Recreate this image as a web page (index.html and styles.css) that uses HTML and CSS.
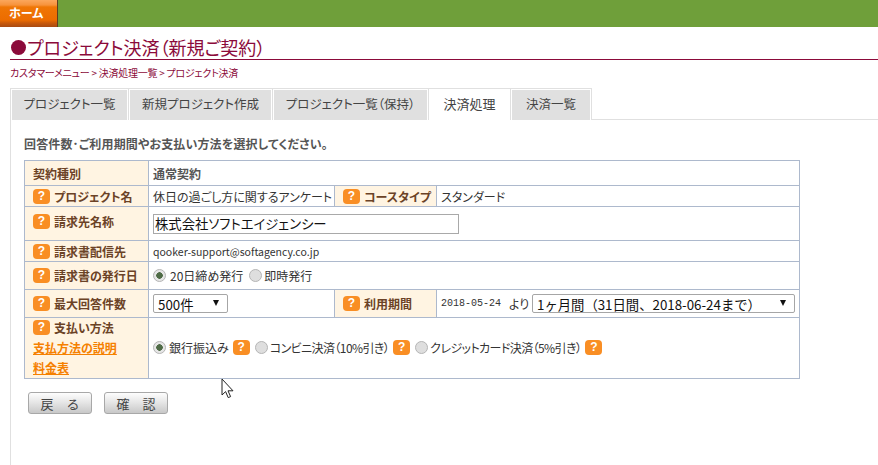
FILE: index.html
```html
<!DOCTYPE html>
<html lang="ja">
<head>
<meta charset="utf-8">
<title>プロジェクト決済</title>
<link rel="stylesheet" href="styles.css">
</head>
<body>
<nav class="topbar"><a class="home">ホーム</a></nav>
<header class="page-head">
  <h1 class="title"><span class="dot"></span>プロジェクト決済（新規ご契約）</h1>
  <p class="crumbs">カスタマーメニュー &gt; 決済処理一覧 &gt; プロジェクト決済</p>
</header>
<main class="panel">
  <ul class="tabs">
    <li class="tab t1">プロジェクト一覧</li>
    <li class="tab t2">新規プロジェクト作成</li>
    <li class="tab t3">プロジェクト一覧（保持）</li>
    <li class="tab t4 active">決済処理</li>
    <li class="tab t5">決済一覧</li>
  </ul>
  <div class="body">
    <p class="lead">回答件数･ご利用期間やお支払い方法を選択してください。</p>
    <table class="form">
      <colgroup><col class="c1"><col class="c2"><col class="c3"><col class="c4"></colgroup>
      <tr class="r1"><th>契約種別</th><td colspan="3" class="bold">通常契約</td></tr>
      <tr class="r2">
        <th><span class="q">?</span>プロジェクト名</th><td>休日の過ごし方に関するアンケート</td>
        <th><span class="q">?</span>コースタイプ</th><td>スタンダード</td>
      </tr>
      <tr class="r3"><th class="top"><span class="q">?</span>請求先名称</th><td colspan="3"><input class="text" type="text" value="株式会社ソフトエイジェンシー"></td></tr>
      <tr class="r4"><th><span class="q">?</span>請求書配信先</th><td colspan="3" class="mail">qooker-support@softagency.co.jp</td></tr>
      <tr class="r5"><th><span class="q">?</span>請求書の発行日</th><td colspan="3">
        <div class="issue">
        <label class="opt"><input class="radio" type="radio" name="issue" checked>20日締め発行</label>
        <label class="opt tight"><input class="radio" type="radio" name="issue">即時発行</label>
        </div>
      </td></tr>
      <tr class="r6">
        <th><span class="q">?</span>最大回答件数</th>
        <td><span class="sel s-count"><select><option>500件</option></select></span></td>
        <th><span class="q">?</span>利用期間</th>
        <td><div class="period"><span class="date">2018-05-24</span><span class="yori">より</span><span class="sel s-term"><select><option>1ヶ月間（31日間、2018-06-24まで）</option></select></span></div></td>
      </tr>
      <tr class="r7">
        <th class="pay">
          <div class="pay-head"><span class="q">?</span>支払い方法</div>
          <a class="link">支払方法の説明</a>
          <a class="link">料金表</a>
        </th>
        <td colspan="3"><div class="pays">
          <label class="opt first"><input class="radio" type="radio" name="pay" checked>銀行振込み</label><span class="q">?</span>
          <label class="opt tight narrow"><input class="radio" type="radio" name="pay">コンビニ決済（10%引き）</label><span class="q">?</span>
          <label class="opt tight narrow"><input class="radio" type="radio" name="pay">クレジットカード決済（5%引き）</label><span class="q">?</span>
        </div></td>
      </tr>
    </table>
    <div class="actions">
      <button class="btn" type="button">戻　る</button>
      <button class="btn" type="button">確　認</button>
    </div>
  </div>
</main>
<svg class="cursor" width="14" height="22" viewBox="0 0 14 22"><path d="M1 1V17L4.6 13.6L7.2 19.6L9.6 18.6L7 12.8H12Z" fill="#fff" stroke="#222" stroke-width="1"/></svg>
</body>
</html>
```
FILE: styles.css
```css
* { box-sizing: border-box; }
html, body { margin: 0; padding: 0; height: 100%; overflow: hidden; }
body {
  position: relative;
  background: #fff;
  color: #333;
  font-family: "Noto Sans CJK JP", "Liberation Sans", sans-serif;
  font-size: 12px;
  font-feature-settings: "palt";
}
.topbar { height: 27px; background: #6f9f3a; }
.home {
  display: block;
  width: 58px;
  height: 27px;
  line-height: 26px;
  padding-left: 9px;
  color: #fff;
  font-size: 12px;
  font-weight: 700;
  border-right: 1px solid #5c3f22;
  background: linear-gradient(#fba75c 0, #f7933c 5px, #ef7605 7px, #ec6c00 20px, #c9590a 23px, #a84a12 27px);
}
.page-head { padding: 0 0 0 10px; }
.title {
  margin: 0;
  height: 33px;
  padding-top: 8px;
  display: flex;
  align-items: center;
  color: #8b0a3a;
  font-size: 18px;
  font-weight: 400;
  line-height: 22px;
  border-bottom: 1px solid #8b0a3a;
}
.dot {
  width: 15px;
  height: 15px;
  margin: 0 1px;
  border-radius: 50%;
  background: #8b0a3a;
}
.crumbs {
  margin: 0;
  height: 28px;
  padding-top: 5px;
  color: #8b0a3a;
  font-size: 10px;
  line-height: 16px;
  letter-spacing: -0.25px;
}
.panel {
  margin-left: 10px;
  height: 377px;
  border-left: 1px solid #e0e0e0;
}
.tabs {
  display: flex;
  list-style: none;
  margin: 0 0 0 -1px;
  padding: 0;
  height: 32px;
  border-bottom: 1px solid #e0e0e0;
}
.tab {
  height: 32px;
  text-align: center;
  line-height: 30px;
  font-size: 12.5px;
  color: #444;
  background: #e0e0e0;
  border: solid #e0e0e0;
  border-width: 1px 1px 0 0;
  box-shadow: inset 1px 1px 0 #fff, inset -1px 0 0 #fff;
}
.t1 { width: 119px; border-left-width: 1px; }
.t2 { width: 144px; }
.t3 { width: 156px; }
.t4 { width: 82px; }
.t5 { width: 81px; }
.tab.active { background: #fff; font-size: 13px; box-shadow: 0 1px 0 #fff; position: relative; }
.lead {
  margin: 0;
  padding: 16px 0 0 13px;
  height: 40px;
  font-size: 12px;
  line-height: 16px;
  font-weight: 700;
  letter-spacing: 0.15px;
  color: #555;
}
.form {
  margin-left: 13px;
  width: 775px;
  table-layout: fixed;
  border-collapse: collapse;
  font-size: 12px;
  line-height: 15px;
}
.c1 { width: 124px; }
.c2 { width: 186px; }
.c3 { width: 102px; }
.c4 { width: 363px; }
.form th, .form td {
  border: 1px solid #adb9cd;
  padding: 0 4px;
  vertical-align: middle;
}
.form th {
  background: #fff4e2;
  color: #6b4226;
  text-align: left;
  font-weight: 700;
  padding-left: 8px;
  white-space: nowrap;
}
.form td { white-space: nowrap; font-size: 12px; color: #333; }
.form td.bold { font-weight: 700; color: #555; }
.form td.mail { font-size: 10.5px; }
.form th.top { vertical-align: top; padding-top: 7px; }
.r1 { height: 25px; }
.r2 { height: 21px; }
.r3 { height: 34px; }
.r4 { height: 21px; }
.r5 { height: 28px; }
.r6 { height: 28px; }
.r7 { height: 61px; }
.q {
  display: inline-block;
  width: 17px;
  height: 15px;
  margin-right: 4px;
  border-radius: 4px;
  background: #f98e24;
  color: #fff;
  font-family: "Liberation Sans", sans-serif;
  font-size: 12px;
  font-weight: 700;
  line-height: 15px;
  text-align: center;
  vertical-align: top;
}
.text {
  display: block;
  width: 306px;
  height: 20px;
  padding: 0 1px;
  border: 1px solid #a9a9a9;
  font-family: inherit;
  font-feature-settings: "palt";
  font-size: 13.33px;
  color: #111;
}
.opt { display: inline-flex; align-items: center; }
.issue { display: flex; gap: 6px; }
.radio {
  appearance: none;
  width: 13px;
  height: 13px;
  margin: 0 4px 0 0;
  border-radius: 50%;
  border: 1px solid #b5b5b5;
  background: #dedede;
  flex: none;
}
.radio:checked { background: radial-gradient(circle, #4f6b46 0 3px, #e6e6e6 3.5px); }
.tight .radio { margin-right: 2px; }
.first .radio { margin-right: 3px; }
.narrow { letter-spacing: -0.58px; }
.sel { position: relative; display: block; }
.sel::after {
  content: "";
  position: absolute;
  top: 6px;
  right: 9px;
  border: 3.5px solid transparent;
  border-top: 6px solid #111;
  border-bottom: 0;
  pointer-events: none;
}
.sel select {
  appearance: none;
  display: block;
  width: 100%;
  height: 19px;
  padding: 0 3px 0 4px;
  background: #fff;
  border: 1px solid #a6a6a6;
  border-radius: 2px;
  font-family: inherit;
  font-size: 13.33px;
  color: #111;
}
.s-count { width: 75px; }
.s-term { width: 263px; }
.period { display: flex; align-items: center; }
.date { font-family: "Liberation Mono", monospace; font-size: 10px; width: 68px; }
.yori { width: 23px; }
.form th.pay { padding-top: 2px; vertical-align: top; }
.link {
  display: block;
  color: #f58000;
  text-decoration: underline;
  line-height: 20px;
}
.pay-head { height: 18px; }
.pays { display: flex; align-items: center; margin-top: -2px; }
.pays .q { margin: 0 5px 0 4px; }
.actions { display: flex; gap: 12px; margin: 13px 0 0 17px; }
.btn {
  width: 64px;
  height: 22px;
  padding: 0;
  border: 1px solid #a8a8a8;
  border-radius: 3px;
  background: linear-gradient(#fdfdfd, #e4e4e4 50%, #c8c8c8);
  font-family: inherit;
  font-size: 13px;
  color: #444;
}
.cursor { position: absolute; left: 221px; top: 378px; }
```
